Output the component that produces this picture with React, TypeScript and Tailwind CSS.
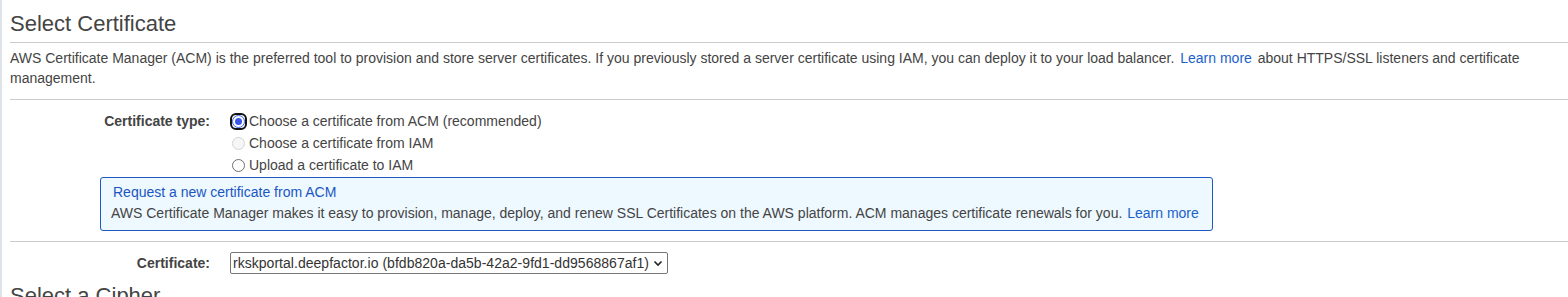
import React from 'react';

const font = { fontFamily: '"Liberation Sans", Arial, sans-serif' };

function Radio({ state }: { state: 'checked' | 'disabled' | 'off' }) {
  if (state === 'checked') {
    return (
      <span className="inline-flex items-center justify-center w-[17px] h-[17px] rounded-[6px] border-2 border-[#111] mr-[2px]">
        <span className="flex items-center justify-center w-[13px] h-[13px] rounded-full border-[1.5px] border-[#3b63f0] bg-white">
          <span className="w-[7px] h-[7px] rounded-full bg-[#3b57e8]" />
        </span>
      </span>
    );
  }
  const cls =
    state === 'disabled'
      ? 'border-[#d4d4d4] bg-[#f6f6f6]'
      : 'border-[#6f6f6f] bg-white';
  return (
    <span className="inline-flex items-center justify-center w-[17px] h-[17px] mr-[2px]">
      <span className={`w-[13px] h-[13px] rounded-full border ${cls}`} />
    </span>
  );
}

export default function App() {
  const options: { label: string; state: 'checked' | 'disabled' | 'off' }[] = [
    { label: 'Choose a certificate from ACM (recommended)', state: 'checked' },
    { label: 'Choose a certificate from IAM', state: 'disabled' },
    { label: 'Upload a certificate to IAM', state: 'off' },
  ];

  return (
    <div className="w-[1568px] h-[297px] overflow-hidden bg-white border-l-2 border-[#dde3e8] pl-[8px] text-[#444] text-[14px]" style={font}>
      {/* Header */}
      <div className="h-[43px] pt-[11px] border-b border-[#cccccc]">
        <h2 className="text-[22px] leading-[25px] text-[#444]">Select Certificate</h2>
      </div>

      <p className="pt-[5px] pb-[11px] leading-[20px] pr-[8px] border-b border-[#cccccc]">
        AWS Certificate Manager (ACM) is the preferred tool to provision and store server certificates. If you previously stored a server certificate using IAM, you can deploy it to your load balancer.{' '}
        <a className="text-[#1a62c9] px-[2px]">Learn more</a>{' '}
        about HTTPS/SSL listeners and certificate management.
      </p>

      {/* Certificate type */}
      <div className="pt-[10px] pb-[10px] border-b border-[#cccccc]">
        <div className="flex">
          <div className="w-[200px] text-right font-bold leading-[22px]">Certificate type:</div>
          <div className="ml-[20px] flex flex-col">
            {options.map((o) => (
              <label key={o.label} className="flex items-center h-[22px]">
                <Radio state={o.state} />
                <span>{o.label}</span>
              </label>
            ))}
          </div>
        </div>

        <div className="ml-[90px] mt-[1px] w-[1113px] h-[54px] rounded-[3px] border border-[#1e58c4] bg-[#eef8ff] pt-[4px] pl-[10px] leading-[21px]">
          <div className="text-[#1a56c2] pl-[2px]">Request a new certificate from ACM</div>
          <div>
            AWS Certificate Manager makes it easy to provision, manage, deploy, and renew SSL Certificates on the AWS platform. ACM manages certificate renewals for you.{' '}
            <a className="text-[#1a62c9] px-[1px]">Learn more</a>
          </div>
        </div>
      </div>

      {/* Certificate select */}
      <div className="flex items-center pt-[10px]">
        <div className="w-[200px] text-right font-bold leading-[22px]">Certificate:</div>
        <div className="ml-[20px]">
          <div className="flex items-center h-[22px] border border-[#767676] rounded-[2px] pl-[2px] pr-[4px] bg-white">
            <span className="text-[14px] text-[#333] leading-[18px] tracking-[0.03px]">rkskportal.deepfactor.io (bfdb820a-da5b-42a2-9fd1-dd9568867af1)</span>
            <svg className="ml-[4px]" width="10" height="10" viewBox="0 0 10 10">
              <path d="M1.5 3.5 L5 7 L8.5 3.5" fill="none" stroke="#222" strokeWidth="1.6" />
            </svg>
          </div>
        </div>
      </div>

      <h2 className="mt-[9px] text-[22px] leading-[25px] text-[#444]">Select a Cipher</h2>
    </div>
  );
}
